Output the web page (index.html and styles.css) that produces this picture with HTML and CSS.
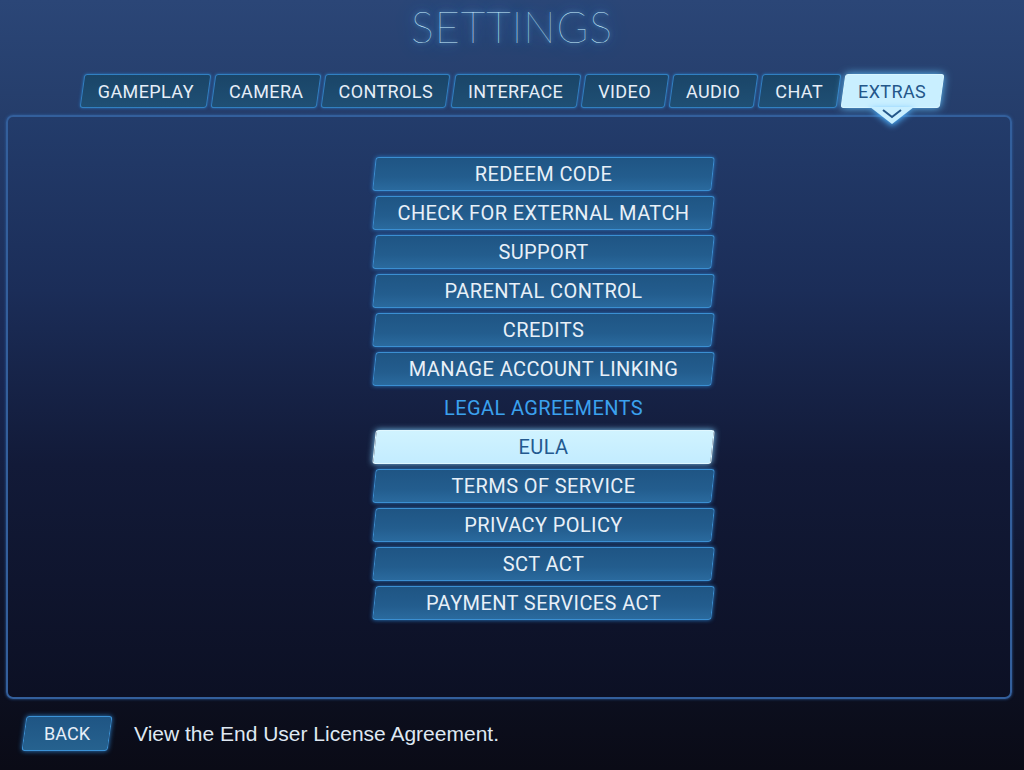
FILE: index.html
```html
<!DOCTYPE html>
<html>
<head>
  <title>Settings - Extras</title>
  <link rel="stylesheet" href="styles.css">
</head>
<body>
  <div class="screen">
    <h1 class="title">SETTINGS</h1>

    <nav class="tabs">
      <div class="tab">GAMEPLAY</div>
      <div class="tab">CAMERA</div>
      <div class="tab">CONTROLS</div>
      <div class="tab">INTERFACE</div>
      <div class="tab">VIDEO</div>
      <div class="tab">AUDIO</div>
      <div class="tab">CHAT</div>
      <div class="tab tab-active">
        EXTRAS
        <svg class="tab-notch" width="44" height="18" viewBox="0 0 44 18">
          <polygon points="0,0 44,0 22,17" fill="#c9efff"/>
          <polyline points="13,3 22,10 31,3" fill="none" stroke="#24578a" stroke-width="2"/>
        </svg>
      </div>
    </nav>

    <main class="panel">
      <div class="menu">
        <div class="menu-btn">REDEEM CODE</div>
        <div class="menu-btn">CHECK FOR EXTERNAL MATCH</div>
        <div class="menu-btn">SUPPORT</div>
        <div class="menu-btn">PARENTAL CONTROL</div>
        <div class="menu-btn">CREDITS</div>
        <div class="menu-btn">MANAGE ACCOUNT LINKING</div>
        <div class="menu-heading">LEGAL AGREEMENTS</div>
        <div class="menu-btn menu-btn-active">EULA</div>
        <div class="menu-btn">TERMS OF SERVICE</div>
        <div class="menu-btn">PRIVACY POLICY</div>
        <div class="menu-btn">SCT ACT</div>
        <div class="menu-btn">PAYMENT SERVICES ACT</div>
      </div>
    </main>

    <footer class="footer">
      <div class="back-btn">BACK</div>
      <p class="hint">View the End User License Agreement.</p>
    </footer>
  </div>
</body>
</html>
```

FILE: styles.css
```css
* {
  margin: 0;
  padding: 0;
  box-sizing: border-box;
}

body {
  width: 1024px;
  height: 770px;
  overflow: hidden;
  background: linear-gradient(180deg, #2b4677 0%, #263f6d 12%, #182650 50%, #0e1328 80%, #0a0b16 100%);
  font-family: Roboto, "Liberation Sans", Arial, sans-serif;
  color: #e4ecf6;
}

.screen {
  display: flex;
  flex-direction: column;
  height: 770px;
}

.title {
  height: 74px;
  display: flex;
  justify-content: center;
  align-items: flex-start;
  padding-top: 1px;
  font-family: Lato, "DejaVu Sans", sans-serif;
  font-weight: 100;
  font-size: 43px;
  letter-spacing: 1px;
  color: #c8f0ff;
  text-shadow: 0 0 4px #6cc4ff, 0 0 12px #2f86d8, 0 0 20px #2f86d8;
}

/* tabs */
.tabs {
  display: flex;
  justify-content: center;
  gap: 4px;
  height: 34px;
  position: relative;
  z-index: 2;
}

.tab {
  position: relative;
  display: flex;
  align-items: center;
  justify-content: center;
  padding: 0 15.5px;
  font-size: 18px;
  letter-spacing: 0.4px;
  color: #e6eef8;
}

.tab::before {
  content: "";
  position: absolute;
  inset: 0;
  z-index: -1;
  transform: skewX(-8deg);
  background: linear-gradient(180deg, #1a4568 0%, #1f4f74 100%);
  border: 1px solid #3180c2;
  border-radius: 3px;
  box-shadow: 0 0 3px #2b78c0;
}

.tab-active {
  color: #24578a;
}

.tab-active::before {
  background: #c9efff;
  border-color: #d8f5ff;
  box-shadow: 0 0 8px #63c4ff;
}

.tab-notch {
  position: absolute;
  left: 50%;
  top: 33px;
  margin-left: -22px;
  filter: drop-shadow(0 2px 3px #4fb3ff);
}

/* panel */
.panel {
  margin: 7px 12px 0 6px;
  height: 584px;
  border: 2px solid #335f9c;
  border-radius: 7px;
  background: linear-gradient(180deg, #233c6b 0%, #1b2d58 30%, #121a38 60%, #0c1024 100%);
  box-shadow: 0 0 3px #2f5fa0;
}

.menu {
  position: relative;
  z-index: 0;
  width: 339px;
  margin: 40px 0 0 366px;
  display: flex;
  flex-direction: column;
  gap: 5px;
}

.menu-btn {
  position: relative;
  height: 34px;
  display: flex;
  align-items: center;
  justify-content: center;
  font-size: 20px;
  letter-spacing: 0.4px;
  color: #e8f0f8;
}

.menu-btn::before {
  content: "";
  position: absolute;
  inset: 0;
  z-index: -1;
  transform: skewX(-6deg);
  background: linear-gradient(180deg, #1f5584 0%, #235d8e 60%, #2a6a9e 100%);
  border: 1px solid #3b8fd2;
  border-radius: 3px;
  box-shadow: 0 0 4px #2a7cc8;
}

.menu-btn-active {
  color: #23598f;
}

.menu-btn-active::before {
  background: linear-gradient(180deg, #d0f3ff 0%, #c3ecff 100%);
  border-color: #e0f7ff;
  box-shadow: 0 0 6px #7fcfff;
}

.menu-heading {
  height: 34px;
  display: flex;
  align-items: center;
  justify-content: center;
  font-size: 20px;
  letter-spacing: 0.4px;
  color: #3ba1ee;
}

/* footer */
.footer {
  flex: 1;
  display: flex;
  align-items: center;
  gap: 24px;
  padding: 0 0 2px 24px;
}

.back-btn {
  position: relative;
  width: 86px;
  height: 35px;
  display: flex;
  align-items: center;
  justify-content: center;
  font-size: 18px;
  color: #e6eef8;
  z-index: 0;
}

.back-btn::before {
  content: "";
  position: absolute;
  inset: 0;
  z-index: -1;
  transform: skewX(-8deg);
  background: linear-gradient(180deg, #1f5584 0%, #26628f 100%);
  border: 1px solid #3c92d6;
  border-radius: 3px;
  box-shadow: 0 0 5px #2c80cc;
}

.hint {
  font-family: "Liberation Sans", Arial, sans-serif;
  font-size: 21px;
  color: #dfe8f2;
}
```
